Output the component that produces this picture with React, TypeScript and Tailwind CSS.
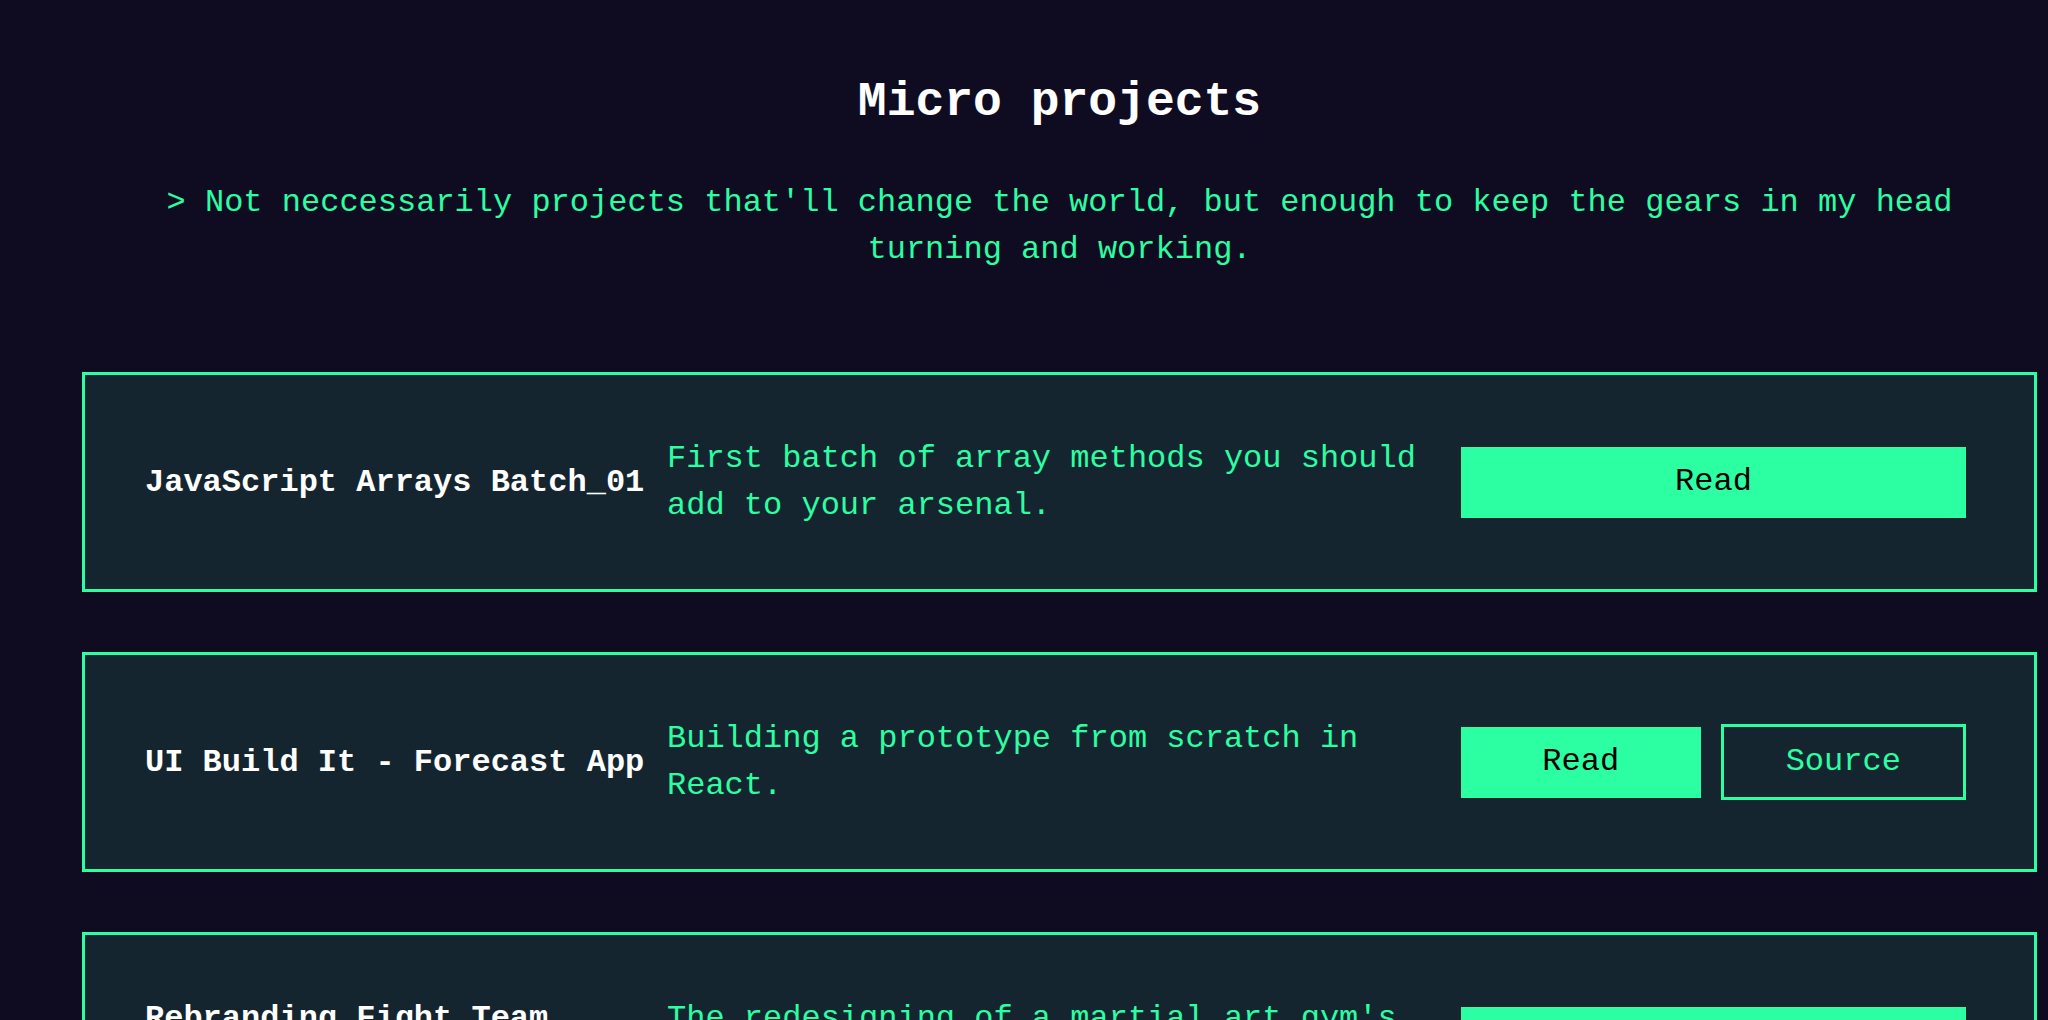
import React from 'react';

interface Project {
  title: string;
  description: string;
  source?: boolean;
}

const projects: Project[] = [
  {
    title: 'JavaScript Arrays Batch_01',
    description: 'First batch of array methods you should add to your arsenal.',
  },
  {
    title: 'UI Build It - Forecast App',
    description: 'Building a prototype from scratch in React.',
    source: true,
  },
  {
    title: 'Rebranding Fight Team Toronto',
    description: "The redesigning of a martial art gym's brand identity and website.",
  },
];

const ProjectCard = ({ project }: { project: Project }) => (
  <div className="border-[3px] border-[#2cfea2] bg-[#152530] pl-[60px] pr-[68px] py-[60px] grid grid-cols-[502px_1fr_505px] gap-x-[20px] items-center">
    <h3 className="text-[32px] leading-[47px] font-bold text-white">{project.title}</h3>
    <p className="text-[32px] leading-[47px] text-[#2cfea2]">{project.description}</p>
    <div className="flex items-center gap-5">
      <button className="flex-1 h-[71px] bg-[#2cfea2] text-black text-[32px] leading-none">Read</button>
      {project.source && (
        <button className="flex-1 h-[76px] border-[3px] border-[#2cfea2] text-[#2cfea2] text-[32px] leading-none">
          Source
        </button>
      )}
    </div>
  </div>
);

export default function App() {
  return (
    <div
      className="min-h-screen bg-[#0f0c22] pl-[82px] pr-[11px] pb-20"
      style={{ fontFamily: '"Liberation Mono", "Courier New", monospace' }}
    >
      <h1 className="pt-[74px] text-center text-[48px] leading-[56px] font-bold text-white">Micro projects</h1>
      <p className="mt-[49px] px-[60px] text-center text-[32px] leading-[47px] text-[#2cfea2]">
        &gt; Not neccessarily projects that'll change the world, but enough to keep the gears in my head turning and working.
      </p>
      <div className="mt-[99px] flex flex-col gap-[60px]">
        {projects.map((p, i) => (
          <ProjectCard key={i} project={p} />
        ))}
      </div>
    </div>
  );
}
